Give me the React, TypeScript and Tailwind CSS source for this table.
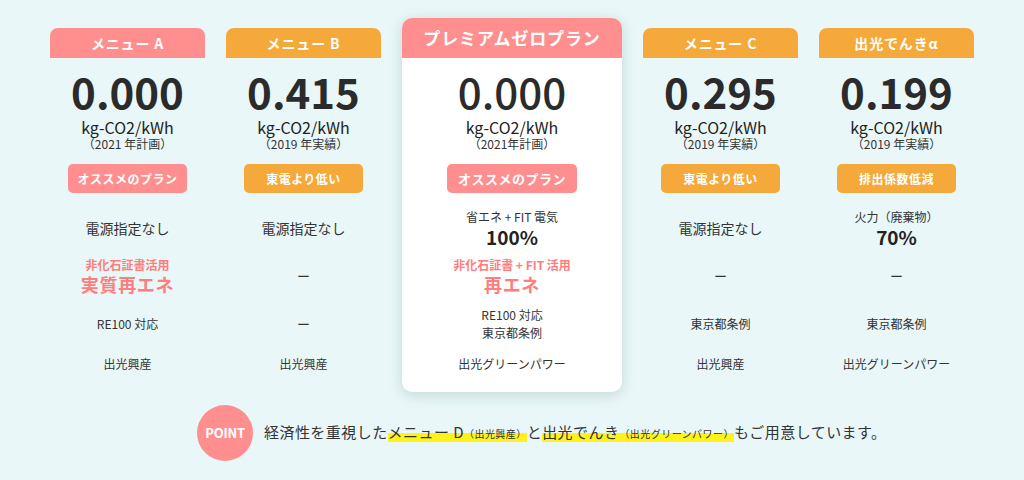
import type { ReactNode } from "react";

const FONT = { fontFamily: '"Noto Sans CJK JP", "Noto Sans", sans-serif' };

type Tone = "pink" | "orange";

interface Plan {
  title: string;
  tone: Tone;
  value: string;
  year: string;
  badge: string;
  source: ReactNode;
  re: ReactNode;
  std: ReactNode;
  supplier: string;
}

const Dash = () => <span className="text-[13px] text-[#333]">ー</span>;

function Source({ label, value }: { label: string; value: string }) {
  return (
    <div className="flex flex-col items-center">
      <span className="text-[12px] leading-[18px] text-[#333]">{label}</span>
      <span className="text-[19px] font-bold leading-[22px] text-[#222]">{value}</span>
    </div>
  );
}

function Renewable({ label, value }: { label: string; value: string }) {
  return (
    <div className="flex flex-col items-center text-[#ff7d7d]">
      <span className="text-[12px] font-bold leading-[16px]">{label}</span>
      <span className="text-[18px] font-bold leading-[22px] tracking-[0.04em]">{value}</span>
    </div>
  );
}

const plans: Plan[] = [
  {
    title: "メニュー A",
    tone: "pink",
    value: "0.000",
    year: "（2021 年計画）",
    badge: "オススメのプラン",
    source: <span className="text-[14px] text-[#333]">電源指定なし</span>,
    re: <Renewable label="非化石証書活用" value="実質再エネ" />,
    std: <span className="text-[12px] text-[#333]">RE100 対応</span>,
    supplier: "出光興産",
  },
  {
    title: "メニュー B",
    tone: "orange",
    value: "0.415",
    year: "（2019 年実績）",
    badge: "東電より低い",
    source: <span className="text-[14px] text-[#333]">電源指定なし</span>,
    re: <Dash />,
    std: <Dash />,
    supplier: "出光興産",
  },
  {
    title: "メニュー C",
    tone: "orange",
    value: "0.295",
    year: "（2019 年実績）",
    badge: "東電より低い",
    source: <span className="text-[14px] text-[#333]">電源指定なし</span>,
    re: <Dash />,
    std: <span className="text-[12px] text-[#333]">東京都条例</span>,
    supplier: "出光興産",
  },
  {
    title: "出光でんきα",
    tone: "orange",
    value: "0.199",
    year: "（2019 年実績）",
    badge: "排出係数低減",
    source: <Source label="火力（廃棄物）" value="70%" />,
    re: <Dash />,
    std: <span className="text-[12px] text-[#333]">東京都条例</span>,
    supplier: "出光グリーンパワー",
  },
];

const toneBg: Record<Tone, string> = {
  pink: "bg-[#ff8f8f]",
  orange: "bg-[#f6a93b]",
};

function Rows({ source, re, std, supplier }: Pick<Plan, "source" | "re" | "std" | "supplier">) {
  return (
    <>
      <div className="mt-[6px] flex h-[58px] items-center justify-center">{source}</div>
      <div className="flex h-[38px] items-center justify-center">{re}</div>
      <div className="flex h-[58px] items-center justify-center">{std}</div>
      <div className="flex h-[22px] items-center justify-center text-[12px] text-[#333]">{supplier}</div>
    </>
  );
}

function Figures({ value, year, weight }: { value: string; year: string; weight: string }) {
  return (
    <>
      <div className={`mt-[13px] text-[42px] leading-[40px] text-[#2b2b2b] ${weight}`}>{value}</div>
      <div className="mt-[7px] text-[16px] leading-[18px] text-[#222]">kg-CO2/kWh</div>
      <div className="text-[12px] leading-[16px] text-[#333]">{year}</div>
    </>
  );
}

function SideColumn({ plan }: { plan: Plan }) {
  return (
    <div className="flex w-[155px] flex-col items-center">
      <div className="flex h-[40px] w-full items-end">
        <div
          className={`flex h-[30px] w-full items-center justify-center rounded-t-lg text-[14px] font-bold tracking-[0.06em] text-white ${toneBg[plan.tone]}`}
        >
          {plan.title}
        </div>
      </div>
      <Figures value={plan.value} year={plan.year} weight="font-bold" />
      <div
        className={`mt-[12px] flex h-[29px] w-[119px] items-center justify-center rounded-[5px] text-[12px] font-bold tracking-[0.04em] text-white ${toneBg[plan.tone]}`}
      >
        {plan.badge}
      </div>
      <Rows source={plan.source} re={plan.re} std={plan.std} supplier={plan.supplier} />
    </div>
  );
}

function PremiumCard() {
  return (
    <div className="flex w-[220px] flex-col items-center overflow-hidden rounded-[10px] bg-white pb-[17px] shadow-[0_3px_14px_rgba(60,110,110,0.22)]">
      <div className="flex h-[40px] w-full items-center justify-center bg-[#ff8f8f] text-[17px] font-bold tracking-[0.05em] text-white">
        プレミアムゼロプラン
      </div>
      <Figures value="0.000" year="（2021年計画）" weight="font-medium" />
      <div className="mt-[12px] flex h-[29px] w-[130px] items-center justify-center rounded-[5px] bg-[#ff8f8f] text-[13px] font-bold tracking-[0.04em] text-white">
        オススメのプラン
      </div>
      <Rows
        source={<Source label="省エネ + FIT 電気" value="100%" />}
        re={<Renewable label="非化石証書 + FIT 活用" value="再エネ" />}
        std={
          <div className="flex flex-col items-center text-[12px] leading-[18px] text-[#333]">
            <span>RE100 対応</span>
            <span>東京都条例</span>
          </div>
        }
        supplier="出光グリーンパワー"
      />
    </div>
  );
}

const mark = "bg-[linear-gradient(transparent_55%,#fff21a_55%)]";

export default function App() {
  return (
    <div className="h-[480px] w-full overflow-hidden bg-[#e9f7f8] pt-[18px]" style={FONT}>
      <div className="flex items-start justify-center gap-[21px]">
        <SideColumn plan={plans[0]} />
        <SideColumn plan={plans[1]} />
        <PremiumCard />
        <SideColumn plan={plans[2]} />
        <SideColumn plan={plans[3]} />
      </div>

      <div className="mt-[13px] flex items-center pl-[197px]">
        <div className="flex h-[56px] w-[56px] items-center justify-center rounded-full bg-[#ff8f8f] text-[13px] font-bold tracking-[-0.02em] text-white">
          POINT
        </div>
        <p className="ml-[11px] text-[15px] leading-[22px] tracking-[0.03em] text-[#333]">
          経済性を重視した
          <span className={mark}>
            メニュー D<span className="text-[10px]">（出光興産）</span>
          </span>
          と
          <span className={mark}>
            出光でんき<span className="text-[10px]">（出光グリーンパワー）</span>
          </span>
          もご用意しています。
        </p>
      </div>
    </div>
  );
}
